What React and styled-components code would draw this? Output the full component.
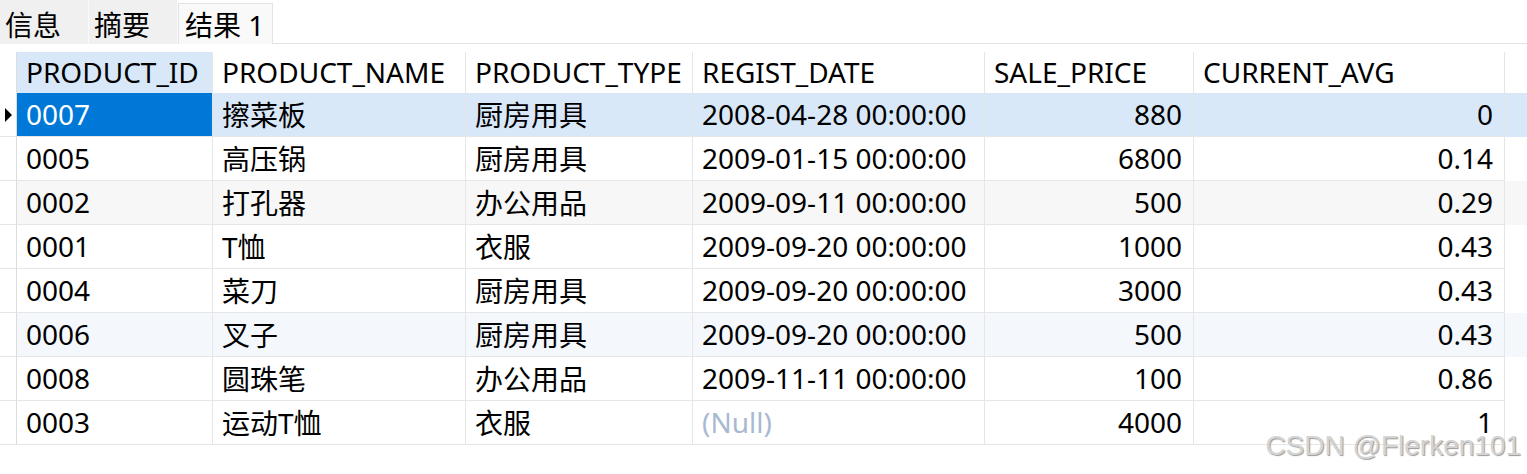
import React from 'react'
import styled, { createGlobalStyle } from 'styled-components'

const GlobalStyle = createGlobalStyle`
  html, body {
    margin: 0;
    padding: 0;
    background: #fff;
  }
  body {
    font-family: "Noto Sans", "Noto Sans CJK SC", sans-serif;
    color: #000;
  }
`

const columns = [
  { key: 'id', title: 'PRODUCT_ID', width: 196 },
  { key: 'name', title: 'PRODUCT_NAME', width: 253 },
  { key: 'type', title: 'PRODUCT_TYPE', width: 227 },
  { key: 'date', title: 'REGIST_DATE', width: 292 },
  { key: 'price', title: 'SALE_PRICE', width: 209, right: true },
  { key: 'avg', title: 'CURRENT_AVG', width: 311, right: true },
]

const rows = [
  { id: '0007', name: '擦菜板', type: '厨房用具', date: '2008-04-28 00:00:00', price: '880', avg: '0' },
  { id: '0005', name: '高压锅', type: '厨房用具', date: '2009-01-15 00:00:00', price: '6800', avg: '0.14' },
  { id: '0002', name: '打孔器', type: '办公用品', date: '2009-09-11 00:00:00', price: '500', avg: '0.29' },
  { id: '0001', name: 'T恤', type: '衣服', date: '2009-09-20 00:00:00', price: '1000', avg: '0.43' },
  { id: '0004', name: '菜刀', type: '厨房用具', date: '2009-09-20 00:00:00', price: '3000', avg: '0.43' },
  { id: '0006', name: '叉子', type: '厨房用具', date: '2009-09-20 00:00:00', price: '500', avg: '0.43' },
  { id: '0008', name: '圆珠笔', type: '办公用品', date: '2009-11-11 00:00:00', price: '100', avg: '0.86' },
  { id: '0003', name: '运动T恤', type: '衣服', date: null, price: '4000', avg: '1' },
]

const rowTone = ['selected', 'plain', 'gray', 'plain', 'plain', 'hover', 'plain', 'plain']

const gridTemplate = `17px ${columns.map((c) => c.width + 'px').join(' ')}`

const Page = styled.div`
  position: relative;
  width: 1527px;
  height: 474px;
  overflow: hidden;
  font-size: 28px;
`

const TabBar = styled.div`
  display: flex;
  height: 44px;
  margin-bottom: 8px;
`

const Tab = styled.div`
  box-sizing: border-box;
  width: ${(p) => p.$width}px;
  padding-left: ${(p) => (p.$active ? 6 : 5)}px;
  display: flex;
  align-items: center;
  white-space: nowrap;
  background: ${(p) => (p.$active ? '#f9f9f9' : '#f0f0f0')};
  border-right: 1px solid ${(p) => (p.$active ? '#e3e3e3' : '#fafafa')};
  border-left: ${(p) => (p.$active ? '1px solid #e3e3e3' : 'none')};
  border-top: ${(p) => (p.$active ? '1px solid #e3e3e3' : 'none')};
  margin-top: ${(p) => (p.$active ? 3 : 0)}px;
  padding-top: ${(p) => (p.$active ? 0 : 3)}px;
`

const TabFiller = styled.div`
  flex: 1;
  border-bottom: 1px solid #e3e3e3;
`

const Grid = styled.div`
  display: flex;
  flex-direction: column;
`

const Row = styled.div`
  display: grid;
  grid-template-columns: ${gridTemplate};
  height: ${(p) => (p.$header ? 41 : 44)}px;
  background: ${(p) =>
    p.$tone === 'selected'
      ? '#d9e8f8'
      : p.$tone === 'gray'
      ? '#f7f7f7'
      : p.$tone === 'hover'
      ? '#f4f8fd'
      : '#fff'};
`

const Cell = styled.div`
  box-sizing: border-box;
  display: flex;
  align-items: center;
  justify-content: ${(p) => (p.$right ? 'flex-end' : 'flex-start')};
  padding: ${(p) => (p.$right ? '0 11px 0 0' : '0 0 0 9px')};
  border-right: 1px solid #e6e6e6;
  border-bottom: ${(p) => (p.$header ? 'none' : '1px solid #e6e6e6')};
  white-space: nowrap;
  overflow: hidden;
  background: ${(p) => (p.$active ? '#0078d7' : p.$headSel ? '#d9e8f8' : 'transparent')};
  color: ${(p) => (p.$active ? '#fff' : '#000')};
  padding-bottom: 2px;
`

const Gutter = styled.div`
  box-sizing: border-box;
  display: flex;
  align-items: center;
  padding-left: 5px;
  background: #fff;
  border-right: 1px solid #dcdcdc;
  border-bottom: ${(p) => (p.$header ? 'none' : '1px solid #e6e6e6')};
`

const Pointer = styled.span`
  width: 0;
  height: 0;
  border-top: 7px solid transparent;
  border-bottom: 7px solid transparent;
  border-left: 7px solid #000;
`

const NullText = styled.span`
  color: #a9b9d1;
`

const Watermark = styled.div`
  position: absolute;
  right: 6px;
  top: 430px;
  font-family: "Liberation Sans", Arial, sans-serif;
  font-size: 28px;
  color: #d4d4d4;
  text-shadow: 1px 1px 1px #9a9a9a;
  white-space: nowrap;
`

export default function App() {
  return (
    <Page>
      <GlobalStyle />
      <TabBar>
        <Tab $width={89}>信息</Tab>
        <Tab $width={89}>摘要</Tab>
        <Tab $width={95} $active>结果 1</Tab>
        <TabFiller />
      </TabBar>
      <Grid>
        <Row $header>
          <Gutter $header />
          {columns.map((c, i) => (
            <Cell key={c.key} $header $headSel={i === 0}>
              {c.title}
            </Cell>
          ))}
        </Row>
        {rows.map((r, ri) => (
          <Row key={r.id} $tone={rowTone[ri]}>
            <Gutter>{ri === 0 && <Pointer />}</Gutter>
            {columns.map((c, ci) => (
              <Cell key={c.key} $right={c.right} $active={ri === 0 && ci === 0}>
                {r[c.key] === null ? <NullText>(Null)</NullText> : r[c.key]}
              </Cell>
            ))}
          </Row>
        ))}
      </Grid>
      <Watermark>CSDN @Flerken101</Watermark>
    </Page>
  )
}
